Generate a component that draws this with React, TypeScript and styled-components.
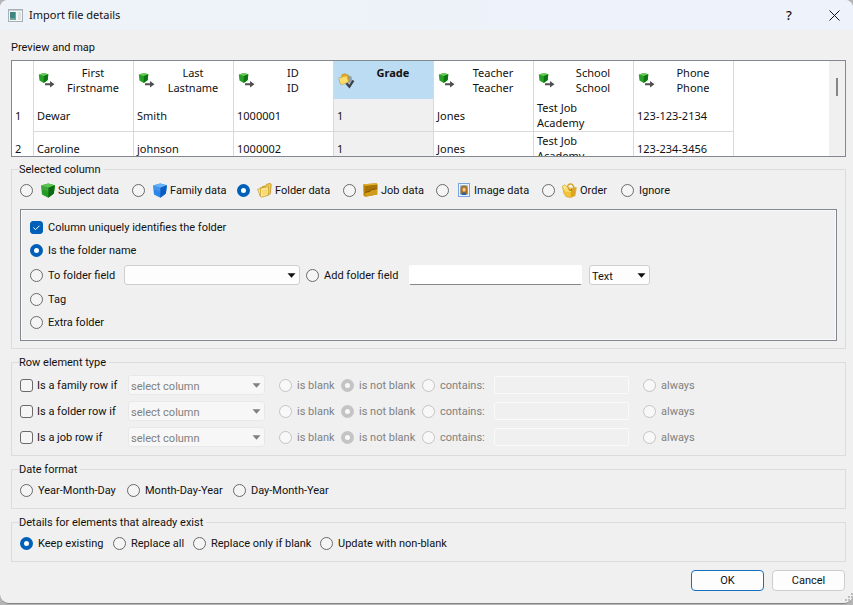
import React, { useState } from "react";
import styled, { createGlobalStyle, css } from "styled-components";

const GlobalStyle = createGlobalStyle`
  * { box-sizing: border-box; }
  body {
    margin: 0;
    background: #b4b4b4;
    color: #111;
    font: 11px/15px Roboto, "Noto Sans", sans-serif;
  }
  input, select, button { font: inherit; color: inherit; margin: 0; }
`;

const Dialog = styled.main`
  position: relative;
  display: flex;
  flex-direction: column;
  min-height: calc(100vh - 2px);
  background: #f0f0f0;
  border-bottom: 1px solid #858585;
  border-radius: 8px 8px 9px 9px;
  overflow: hidden;
`;

const TitleBar = styled.header`
  display: flex;
  align-items: center;
  height: 30px;
  padding: 0 13px 0 8px;
  background: linear-gradient(90deg, #edf3f8, #eef2fb);
`;

const Title = styled.h1`
  flex: 1;
  margin: 0 0 0 6px;
  font: 11px/16px "Noto Sans", sans-serif;
`;

const CaptionButton = styled.button`
  display: grid;
  place-items: center;
  width: 12px;
  height: 20px;
  margin-left: 33px;
  padding: 0;
  border: 0;
  background: none;
  font: 500 13px/20px "Noto Sans", sans-serif;
`;

const Body = styled.div`
  display: flex;
  flex-direction: column;
  flex: 1;
  padding: 10px 7px 12px 11px;
`;

const PreviewSection = styled.section`
  display: flex;
  flex-direction: column;
  gap: 5px;
  margin-bottom: 5px;
`;

const PreviewTitle = styled.h2`
  margin: 0;
  font: inherit;
`;

const TableView = styled.div`
  display: flex;
  justify-content: space-between;
  height: 97px;
  border: 1px solid #828790;
  background: #fff;
  font-family: "Noto Sans", sans-serif;
  overflow: hidden;
`;

const PreviewTable = styled.table`
  table-layout: fixed;
  width: 722px;
  height: 104px;
  border-spacing: 0;
`;

const RowNumberCol = styled.col`
  width: 22px;
`;

const cell = css`
  padding: 0 8px 0 3px;
  border-right: 1px solid #d9d9d9;
  text-align: left;
  font-weight: 400;
`;

const HeadCell = styled.th<{ $selected?: boolean }>`
  ${cell}
  height: 38px;
  padding: 0;
  background: ${(p) => (p.$selected ? "#bcdcf4" : "#fff")};
  font-weight: ${(p) => (p.$selected ? 700 : 400)};
`;

const HeadContent = styled.div`
  display: flex;
  align-items: center;
  padding: 0 2px 0 4px;
`;

const HeadText = styled.span`
  flex: 1;
  height: 30px;
  text-align: center;
  white-space: pre-line;
`;

const RowHead = styled.th`
  ${cell}
`;

const Cell = styled.td<{ $selected?: boolean }>`
  ${cell}
  height: 33px;
  border-bottom: 1px solid #d9d9d9;
  background: ${(p) => (p.$selected ? "#f0f0f0" : "#fff")};
`;

const ScrollTrack = styled.div`
  display: flex;
  justify-content: center;
  width: 16px;
  padding-top: 17px;
  background: #f0f0f0;
`;

const ScrollThumb = styled.div`
  width: 2px;
  height: 18px;
  background: #868686;
`;

const Group = styled.fieldset`
  min-width: 0;
  margin: 0 0 6px;
  padding: 0 8px 5px 7px;
  border: 1px solid #dcdcdc;
`;

const Legend = styled.legend`
  padding: 0 3px 0 0;
  line-height: 15px;
`;

const Options = styled.div<{ $columns: string }>`
  display: grid;
  grid-template-columns: ${(p) => p.$columns};
  align-items: center;
  height: 26px;
  padding-left: 1px;
`;

const Label = styled.label<{ $gap?: number; $disabled?: boolean }>`
  display: flex;
  align-items: center;
  gap: ${(p) => p.$gap ?? 5}px;
  color: ${(p) => (p.$disabled ? "#808080" : "inherit")};
  white-space: nowrap;
`;

const Radio = styled.input.attrs({ type: "radio" })`
  appearance: none;
  flex: none;
  width: 13px;
  height: 13px;
  border: 1px solid #6a6a6a;
  border-radius: 50%;
  background: #f5f5f5;
  &:checked { border: 4px solid #005fb8; background: #fff; }
  &:disabled { border-color: #c4c4c4; background: #f8f8f8; }
`;

const CheckWrap = styled.span`
  display: grid;
  flex: none;
  width: 13px;
  height: 13px;
  & > * { grid-area: 1 / 1; }
  & > svg { pointer-events: none; }
`;

const Check = styled.input.attrs({ type: "checkbox" })`
  appearance: none;
  width: 13px;
  height: 13px;
  border: 1px solid #6a6a6a;
  border-radius: 3px;
  background: #f5f5f5;
  &:checked { border-color: #005fb8; background: #005fb8; }
  &:not(:checked) + svg { visibility: hidden; }
`;

const Panel = styled.div`
  display: flex;
  flex-direction: column;
  margin: 6px 0 2px 1px;
  padding: 6px 9px;
  border: 1px solid #828790;
  box-shadow: inset 0 0 0 1px #fafafa;
`;

const PanelRow = styled.div`
  display: flex;
  align-items: center;
  height: 23px;
`;

const FieldRow = styled.div`
  display: grid;
  grid-template-columns: 94px 176px 6px 97px 6px 173px 7px 61px;
  align-items: center;
  height: 26px;
  & > :nth-child(2) { grid-column: 2; }
  & > :nth-child(3) { grid-column: 4; }
  & > :nth-child(4) { grid-column: 6; }
  & > :nth-child(5) { grid-column: 8; }
`;

const ComboWrap = styled.span<{ $disabled?: boolean }>`
  display: grid;
  align-items: center;
  color: ${(p) => (p.$disabled ? "#808080" : "#111")};
  & > * { grid-area: 1 / 1; }
  & > svg { justify-self: end; margin-right: 4px; pointer-events: none; }
`;

const Combo = styled.select`
  appearance: none;
  width: 100%;
  height: 20px;
  padding: 2px 16px 0 2px;
  border: 1px solid #cfcfcf;
  border-radius: 3px;
  background: #fdfdfd;
  &:disabled { opacity: 1; border-color: #e8e8e8; background: #f7f7f7; }
`;

const TextBox = styled.input.attrs({ type: "text" })`
  width: 100%;
  min-width: 0;
  height: 20px;
  padding: 0 3px;
  border: 1px solid #fff;
  border-bottom-color: #868686;
  border-radius: 2px;
  background: #fff;
  &:disabled { height: 18px; border-color: #fafafa; background: #f0f0f0; }
`;

const ConditionRow = styled.div`
  display: grid;
  grid-template-columns: 108px 137px 14px 62px 81px 72px 135px 14px 60px;
  align-items: center;
  height: 26px;
  padding-left: 1px;
  & > :nth-child(3) { grid-column: 4; }
  & > :nth-child(7) { grid-column: 9; }
`;

const Conditions = styled.div`
  padding-top: 2px;
`;

const Footer = styled.footer`
  display: flex;
  justify-content: flex-end;
  gap: 8px;
  padding: 2px 1px 0 0;
`;

const PushButton = styled.button<{ $primary?: boolean }>`
  width: 73px;
  height: 21px;
  padding: 0;
  border: 1px solid ${(p) => (p.$primary ? "#1a6fbd" : "#cdcdcd")};
  border-radius: 4px;
  background: #fdfdfd;
`;

const Grip = styled.svg`
  position: absolute;
  right: 0;
  bottom: 1px;
`;

const IconSlot = styled.span`
  display: grid;
  place-items: center;
  width: 15px;
  margin: 0 -2px 0 2px;
`;

const WindowIcon = () => (
  <svg width="15" height="13" viewBox="0 0 15 13" aria-hidden="true">
    <rect x=".5" y=".5" width="14" height="12" fill="#f4f6f6" stroke="#a9b0b5" />
    <path d="M1 1.5h13" stroke="#c8ced2" />
    <rect x="2" y="3" width="6" height="8" fill="#6fa5a1" />
    <rect x="2" y="3" width="5" height="6" fill="#3f8583" />
    <rect x="10" y="3" width="3" height="8" fill="#dce3e5" />
  </svg>
);

const Cube = ({ tone }: { tone: "green" | "blue" }) => {
  const [top, left, right] =
    tone === "green" ? ["#5cc552", "#259a24", "#0b6b10"] : ["#66b2f8", "#2b86ea", "#0a5cc2"];
  return (
    <svg width="14" height="15" viewBox="0 0 14 15" aria-hidden="true">
      <path d="M0 2.6 7.2.5l6.7 1.7-1 8.3-5.6 4.3L1 11.4z" fill={left} />
      <path d="M0 2.6 7.2.5l6.7 1.7-6.5 2.5z" fill={top} />
      <path d="m7.4 4.7 6.500-2.5-1 8.3-5.600 4.300z" fill={right} />
      <path d="M.3 3 7.4 5l-.1 3.600-6.600-2.200z" fill="#fff" opacity=".12" />
    </svg>
  );
};

const CubeArrow = () => (
  <svg width="17" height="16" viewBox="0 0 17 16" aria-hidden="true">
    <path d="M.8 2.500 6 .9l4.300 1.400-.6 5.700-4 2.900-4.200-2.500z" fill="#27a025" />
    <path d="M.8 2.500 6 .9l4.300 1.400-4.400 1.700z" fill="#6ccb5d" />
    <path d="m5.900 4 4.400-1.700-.6 5.700-4 2.900z" fill="#0d7513" />
    <path d="M7 11.200h5V9l4.500 3.200-4.500 3.200v-2.200H7z" fill="#505050" />
  </svg>
);

const FolderCheck = () => (
  <svg width="17" height="17" viewBox="0 0 17 17" aria-hidden="true">
    <path d="m9 3 4.500 1.500 1 5-4 2z" fill="#8fa3b5" />
    <path d="m.8 6 2.700-.8.500-2.700L7.200 1.500l1.300 1 1.700.2.600 7.200-6.800 2.700-1.800-1z" fill="#dfa922" stroke="#b98a22" strokeWidth=".5" />
    <path d="m1 6.200 7.500-2 1.800 5.500-6 2.500-1.800-1z" fill="#fbdb6c" />
    <path d="m7.500 12 1.900-1.500 1.800 2.200 3.300-4.700 1.900 1-4.900 7.500z" fill="#3c4048" />
  </svg>
);

const Folder = () => (
  <svg width="15" height="15" viewBox="0 0 15 15" aria-hidden="true">
    <path d="M5.500 3.500 9 2.800l.8-1.600 3.700-.7.700 1-1 9.300-2 1.200-6 .5z" fill="#f3cb53" stroke="#b98c1c" strokeWidth=".8" />
    <path d="M.6 6.200 3 5.800 4.200 4l.6 8.800-1.500.6z" fill="#fbe9a4" stroke="#c29522" strokeWidth=".7" />
    <path d="m3.700 5.200 7.800-1.600-.4 8.700-6.500 1.900-1.300-1z" fill="#fdeb9c" stroke="#c79b27" strokeWidth=".8" />
    <path d="m5 7 5.500-1.200-.3 5.500-4.800 1.200z" fill="#f8da72" />
  </svg>
);

const Job = () => (
  <svg width="15" height="14" viewBox="0 0 15 14" aria-hidden="true">
    <path d="M.3 1.200 13.700.3l.8 1.500-.3 9.700-11.900 2.300L.5 12.500z" fill="#b98308" />
    <path d="M.5 1.300 13.600.5l.6 1.300-12 1.200z" fill="#dfb02e" />
    <path d="M2.200 3 14.200 1.800v3.500L7.500 6.500 6.500 8l-4.300.8z" fill="#a87405" />
    <path d="m2.200 8.800 4.300-.8 1-1.500 6.700-1.200v1L8 7.500l-1 1.500-4.800.9z" fill="#7c5503" />
    <path d="M2.200 9.900 7 9l1-1.500 6.200-1.200v5.200L2.300 13.800z" fill="#d29c19" />
  </svg>
);

const Portrait = () => (
  <svg width="12" height="14" viewBox="0 0 12 14" aria-hidden="true">
    <rect x=".5" y=".5" width="11" height="13" fill="#eef5ff" stroke="#79a4e4" />
    <rect x="2" y="2" width="8" height="10" fill="#9dc3f2" />
    <path d="M2.500 11V5.500C2.500 3.500 4 2.500 6 2.500s3.500 1 3.500 3V11z" fill="#a8701a" />
    <path d="M4.500 5.500 6 4.600l1.700.9v2L6 9 4.500 7.500z" fill="#f2c68c" />
    <path d="M3.500 12 4.500 9.600h3l1 2.400z" fill="#2c5e9e" />
  </svg>
);

const Basket = () => (
  <svg width="15" height="15" viewBox="0 0 15 15" aria-hidden="true">
    <path d="M5.500 5.300C5.300 2 7 .8 8.800 1c2 .2 2.900 1.800 3 4.200" fill="none" stroke="#d9a524" strokeWidth="1.400" />
    <path d="M.4 3.300 2.500 1.800 5.600 4.200 9 5.300l5.300-.8-1.300 8.200-4.500 1.900-4.400-.9-2.200-3.500z" fill="#f3c536" stroke="#cf9a1e" strokeWidth=".6" />
    <path d="M1 3.500 2.700 2.200l2.700 2.500-3.200 1.600z" fill="#fde88e" />
    <path d="m2 6.500 3.400-1.600L9 6v3L3.200 8.500z" fill="#fbdc6a" />
    <path d="m9 5.700 4.900-.8-1.200 7.500-4 1.700z" fill="#dda526" />
    <path d="m6.500 5.500 1.200 2 2.300-1" fill="none" stroke="#9a6a0c" />
  </svg>
);

const ArrowDown = () => (
  <svg width="9" height="5" viewBox="0 0 9 5" aria-hidden="true">
    <path d="M.5.3h8L4.500 4.800z" fill="currentColor" />
  </svg>
);

const CheckBox = ({ defaultChecked }: { defaultChecked?: boolean }) => (
  <CheckWrap>
    <Check defaultChecked={defaultChecked} />
    <svg width="13" height="13" viewBox="0 0 13 13" aria-hidden="true">
      <path d="m3.500 6.500 2 2.200 4-4" fill="none" stroke="#fff" />
    </svg>
  </CheckWrap>
);

const columns = [
  { title: "First", field: "Firstname" },
  { title: "Last", field: "Lastname" },
  { title: "ID", field: "ID" },
  { title: "Grade", field: "", selected: true },
  { title: "Teacher", field: "Teacher" },
  { title: "School", field: "School" },
  { title: "Phone", field: "Phone" },
];

const rows = [
  ["Dewar", "Smith", "1000001", "1", "Jones", "Test Job Academy", "123-123-2134"],
  ["Caroline", "johnson", "1000002", "1", "Jones", "Test Job Academy", "123-234-3456"],
];

const kinds = [
  { label: "Subject data", icon: <Cube tone="green" /> },
  { label: "Family data", icon: <Cube tone="blue" /> },
  { label: "Folder data", icon: <Folder /> },
  { label: "Job data", icon: <Job /> },
  { label: "Image data", icon: <Portrait /> },
  { label: "Order", icon: <Basket /> },
  { label: "Ignore", icon: null },
];

type RadioOptionsProps = { name: string; items: string[]; initial?: string; tracks: string };

const RadioOptions = ({ name, items, initial, tracks }: RadioOptionsProps) => (
  <Options $columns={tracks}>
    {items.map((item) => (
      <Label key={item}>
        <Radio name={name} defaultChecked={item === initial} />
        {item}
      </Label>
    ))}
  </Options>
);

const Condition = ({ kind }: { kind: string }) => (
  <ConditionRow>
    <Label $gap={4}>
      <CheckBox />
      {`Is a ${kind} row if`}
    </Label>
    <ComboWrap $disabled>
      <Combo disabled aria-label={`Column for ${kind} row`}>
        <option>select column</option>
      </Combo>
      <ArrowDown />
    </ComboWrap>
    {["is blank", "is not blank", "contains:"].map((text) => (
      <Label key={text} $disabled>
        <Radio name={`${kind}-condition`} disabled defaultChecked={text === "is not blank"} />
        {text}
      </Label>
    ))}
    <TextBox disabled aria-label={`Text that a ${kind} row contains`} />
    <Label $disabled>
      <Radio name={`${kind}-condition`} disabled />
      always
    </Label>
  </ConditionRow>
);

export default function App() {
  const [kind, setKind] = useState("Folder data");
  return (
    <>
      <GlobalStyle />
      <Dialog>
        <TitleBar>
          <WindowIcon />
          <Title>Import file details</Title>
          <CaptionButton aria-label="Help">?</CaptionButton>
          <CaptionButton aria-label="Close">
            <svg width="11" height="11" viewBox="0 0 11 11" aria-hidden="true">
              <path d="M.5.5l10 10M10.500.5l-10 10" stroke="#111" fill="none" />
            </svg>
          </CaptionButton>
        </TitleBar>
        <Body>
          <PreviewSection>
            <PreviewTitle>Preview and map</PreviewTitle>
            <TableView>
              <PreviewTable>
                <colgroup>
                  <RowNumberCol />
                  {columns.map((c) => (
                    <col key={c.title} />
                  ))}
                </colgroup>
                <thead>
                  <tr>
                    <HeadCell />
                    {columns.map((c) => (
                      <HeadCell key={c.title} $selected={c.selected} scope="col">
                        <HeadContent>
                          {c.selected ? <FolderCheck /> : <CubeArrow />}
                          <HeadText>{`${c.title}\n${c.field}`}</HeadText>
                        </HeadContent>
                      </HeadCell>
                    ))}
                  </tr>
                </thead>
                <tbody>
                  {rows.map((row, i) => (
                    <tr key={i}>
                      <RowHead scope="row">{i + 1}</RowHead>
                      {row.map((value, j) => (
                        <Cell key={j} $selected={columns[j].selected}>
                          {value}
                        </Cell>
                      ))}
                    </tr>
                  ))}
                </tbody>
              </PreviewTable>
              <ScrollTrack>
                <ScrollThumb />
              </ScrollTrack>
            </TableView>
          </PreviewSection>

          <Group>
            <Legend>Selected column</Legend>
            <Options $columns="112px 105px 106px 93px 106px 79px auto">
              {kinds.map((k) => (
                <Label key={k.label}>
                  <Radio name="kind" checked={kind === k.label} onChange={() => setKind(k.label)} />
                  {k.icon && <IconSlot>{k.icon}</IconSlot>}
                  {k.label}
                </Label>
              ))}
            </Options>
            <Panel>
              <PanelRow>
                <Label>
                  <CheckBox defaultChecked />
                  Column uniquely identifies the folder
                </Label>
              </PanelRow>
              <PanelRow>
                <Label>
                  <Radio name="target" defaultChecked />
                  Is the folder name
                </Label>
              </PanelRow>
              <FieldRow>
                <Label>
                  <Radio name="target" />
                  To folder field
                </Label>
                <ComboWrap>
                  <Combo aria-label="Folder field">
                    <option></option>
                  </Combo>
                  <ArrowDown />
                </ComboWrap>
                <Label>
                  <Radio name="target" />
                  Add folder field
                </Label>
                <TextBox aria-label="New folder field name" />
                <ComboWrap>
                  <Combo aria-label="New field type">
                    <option>Text</option>
                  </Combo>
                  <ArrowDown />
                </ComboWrap>
              </FieldRow>
              <PanelRow>
                <Label>
                  <Radio name="target" />
                  Tag
                </Label>
              </PanelRow>
              <PanelRow>
                <Label>
                  <Radio name="target" />
                  Extra folder
                </Label>
              </PanelRow>
            </Panel>
          </Group>

          <Group>
            <Legend>Row element type</Legend>
            <Conditions>
              <Condition kind="family" />
              <Condition kind="folder" />
              <Condition kind="job" />
            </Conditions>
          </Group>

          <Group>
            <Legend>Date format</Legend>
            <RadioOptions name="date" items={["Year-Month-Day", "Month-Day-Year", "Day-Month-Year"]} tracks="107px 106px auto" />
          </Group>

          <Group>
            <Legend>Details for elements that already exist</Legend>
            <RadioOptions
              name="existing"
              items={["Keep existing", "Replace all", "Replace only if blank", "Update with non-blank"]}
              initial="Keep existing"
              tracks="93px 80px 127px auto"
            />
          </Group>

          <Footer>
            <PushButton $primary>OK</PushButton>
            <PushButton>Cancel</PushButton>
          </Footer>
        </Body>
        <Grip width="8" height="10" viewBox="0 0 8 10" aria-hidden="true">
          <path d="M6 1h2v2H6zM3 4h2v2H3zM6 4h2v2H6zM0 7h2v2H0zM3 7h2v2H3zM6 7h2v2H6z" fill="#bdbdbd" />
        </Grip>
      </Dialog>
    </>
  );
}
